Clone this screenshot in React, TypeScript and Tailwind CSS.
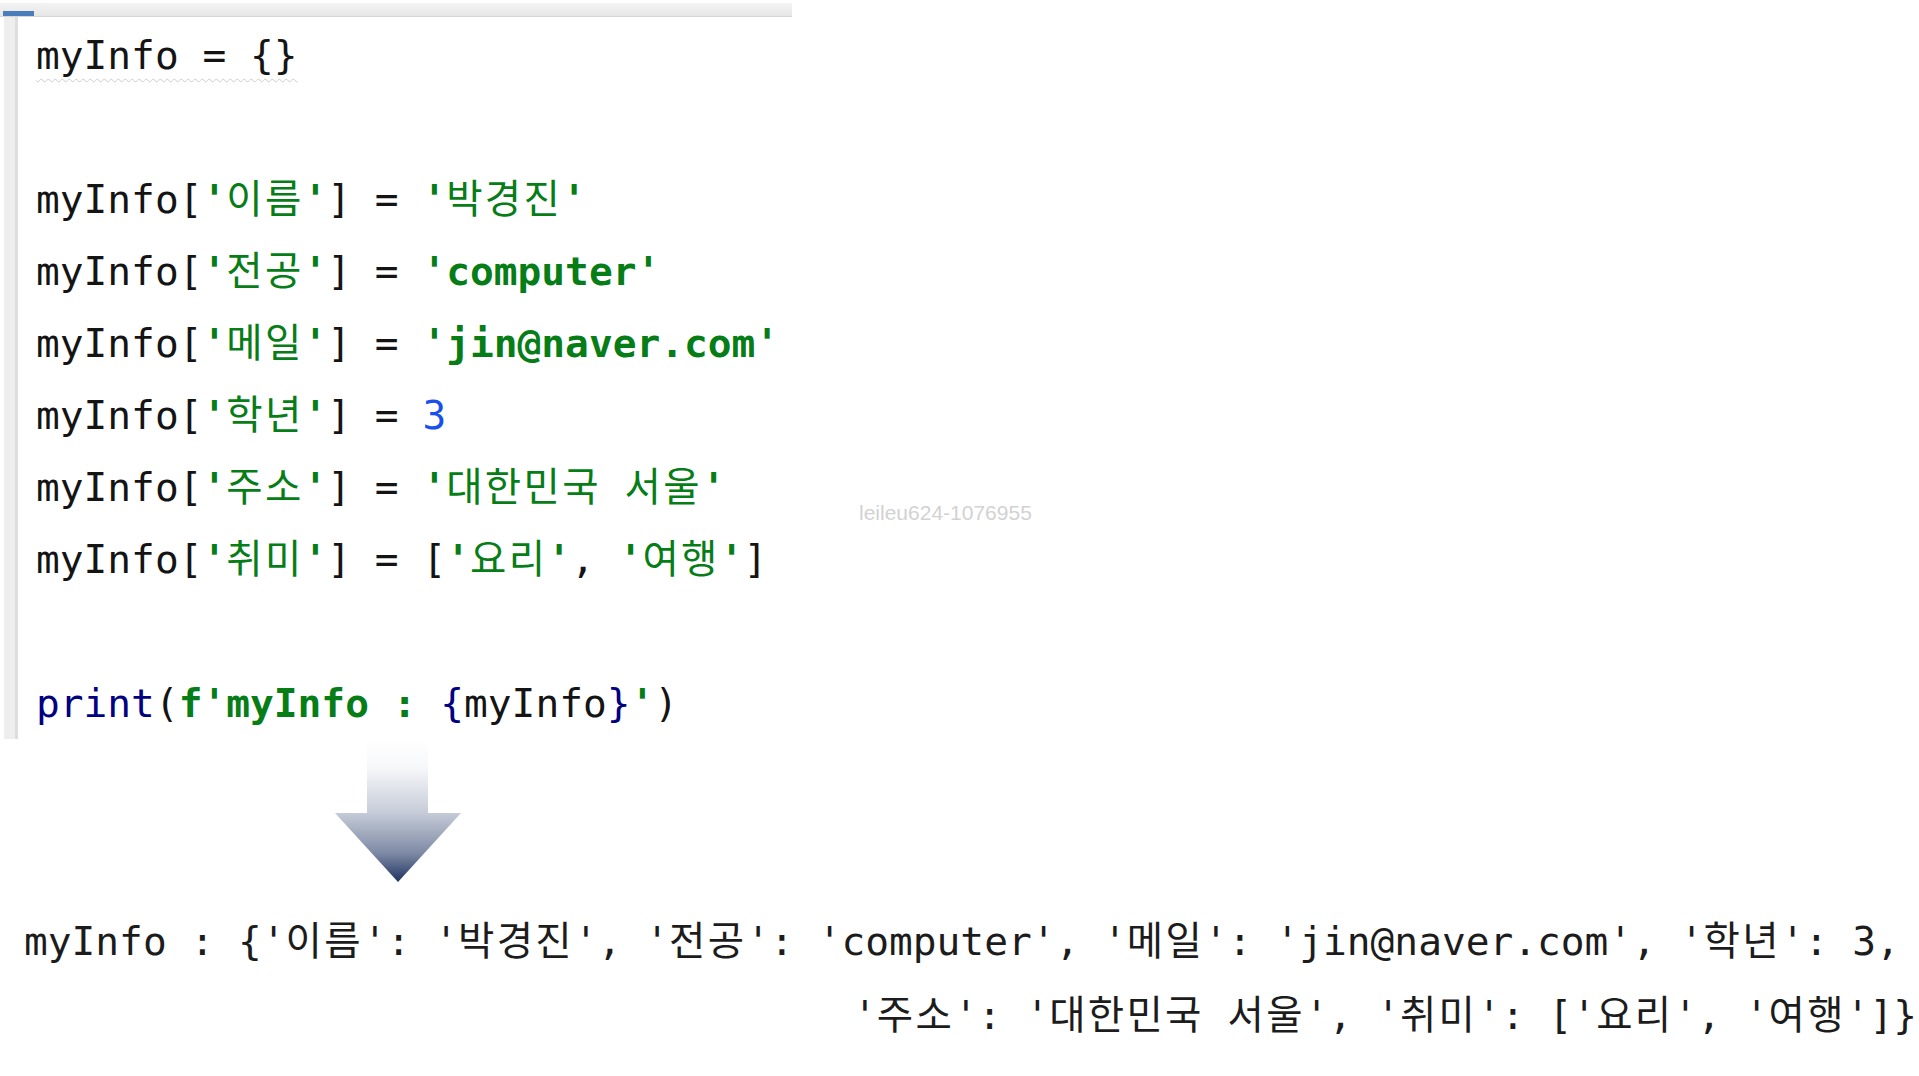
import React from "react";

type Tok = [string, string];

const D = "text-[#141414]";
const SB = "text-[#067d17] font-bold";
const N = "text-[#1750eb]";
const B = "text-[#000080]";

function Seg({ text, cls }: { text: string; cls: string }) {
  const parts = text.split(/([\uac00-\ud7a3]+)/);
  return (
    <span className={cls}>
      {parts.map((p, i) =>
        /[\uac00-\ud7a3]/.test(p) ? (
          <span key={i} className="tracking-[2.3px] leading-none font-normal">
            {p}
          </span>
        ) : (
          <React.Fragment key={i}>{p}</React.Fragment>
        )
      )}
    </span>
  );
}

const code: Tok[][] = [
  [["myInfo = {}", D + " underline decoration-wavy decoration-[#cdcdcd] decoration-1 underline-offset-[9px]"]],
  [],
  [["myInfo[", D], ["'이름'", SB], ["] = ", D], ["'박경진'", SB]],
  [["myInfo[", D], ["'전공'", SB], ["] = ", D], ["'computer'", SB]],
  [["myInfo[", D], ["'메일'", SB], ["] = ", D], ["'jin@naver.com'", SB]],
  [["myInfo[", D], ["'학년'", SB], ["] = ", D], ["3", N]],
  [["myInfo[", D], ["'주소'", SB], ["] = ", D], ["'대한민국 서울'", SB]],
  [["myInfo[", D], ["'취미'", SB], ["] = [", D], ["'요리'", SB], [", ", D], ["'여행'", SB], ["]", D]],
  [],
  [["print", B], ["(", D], ["f'myInfo : ", SB], ["{", B], ["myInfo", D], ["}", B], ["'", SB], [")", D]],
];

export default function App() {
  return (
    <div className="relative w-[1919px] h-[1076px] overflow-hidden bg-white font-['DejaVu_Sans_Mono','Noto_Sans_CJK_KR',monospace] text-[39.5px]">
      {/* Editor */}
      <div className="w-[792px] flex flex-col">
        <div className="mt-[3px] h-[14px] bg-gradient-to-b from-[#f4f4f4] to-[#e6e6e6] border-b border-[#d6d6d6] relative">
          <div className="absolute left-[3px] top-[8px] w-[31px] h-[5px] bg-[#4b7dbd]" />
        </div>
        <div className="flex">
          <div className="ml-[4px] w-[14px] bg-[#eeeeee] border-r-[3px] border-[#dedede]" />
          <div className="pl-[18px] pt-[2px] flex flex-col">
            {code.map((line, i) => (
              <div key={i} className="h-[72px] leading-[72px] whitespace-pre">
                {line.map((t, j) => (
                  <Seg key={j} text={t[0]} cls={t[1]} />
                ))}
              </div>
            ))}
          </div>
        </div>
      </div>

      {/* Arrow */}
      <div className="mt-[1px] ml-[335px] w-[126px] h-[143px]">
        <svg width="126" height="143" viewBox="0 0 126 143">
          <defs>
            <linearGradient id="ag" x1="0" y1="0" x2="0" y2="1">
              <stop offset="0" stopColor="#ffffff" />
              <stop offset="0.2" stopColor="#f6f7f9" />
              <stop offset="0.51" stopColor="#c6ccd8" />
              <stop offset="0.8" stopColor="#7d89a4" />
              <stop offset="1" stopColor="#1e3361" />
            </linearGradient>
          </defs>
          <path d="M32 0 H93 V73 H126 L63 142 L0 73 H32 Z" fill="url(#ag)" />
        </svg>
      </div>

      {/* Output */}
      <div className="mt-[21px] leading-[74px] text-[#1c1c1c] whitespace-pre">
        <div className="pl-[24px]">
          <Seg text="myInfo : {'이름': '박경진', '전공': 'computer', '메일': 'jin@naver.com', '학년': 3," cls="" />
        </div>
        <div className="pl-[853px]">
          <Seg text="'주소': '대한민국 서울', '취미': ['요리', '여행']}" cls="" />
        </div>
      </div>

      {/* Watermark */}
      <div className="absolute left-[859px] top-[502px] font-['Liberation_Sans',Arial,sans-serif] text-[21px] leading-[21px] text-[#d2d2d2]">
        leileu624-1076955
      </div>
    </div>
  );
}
